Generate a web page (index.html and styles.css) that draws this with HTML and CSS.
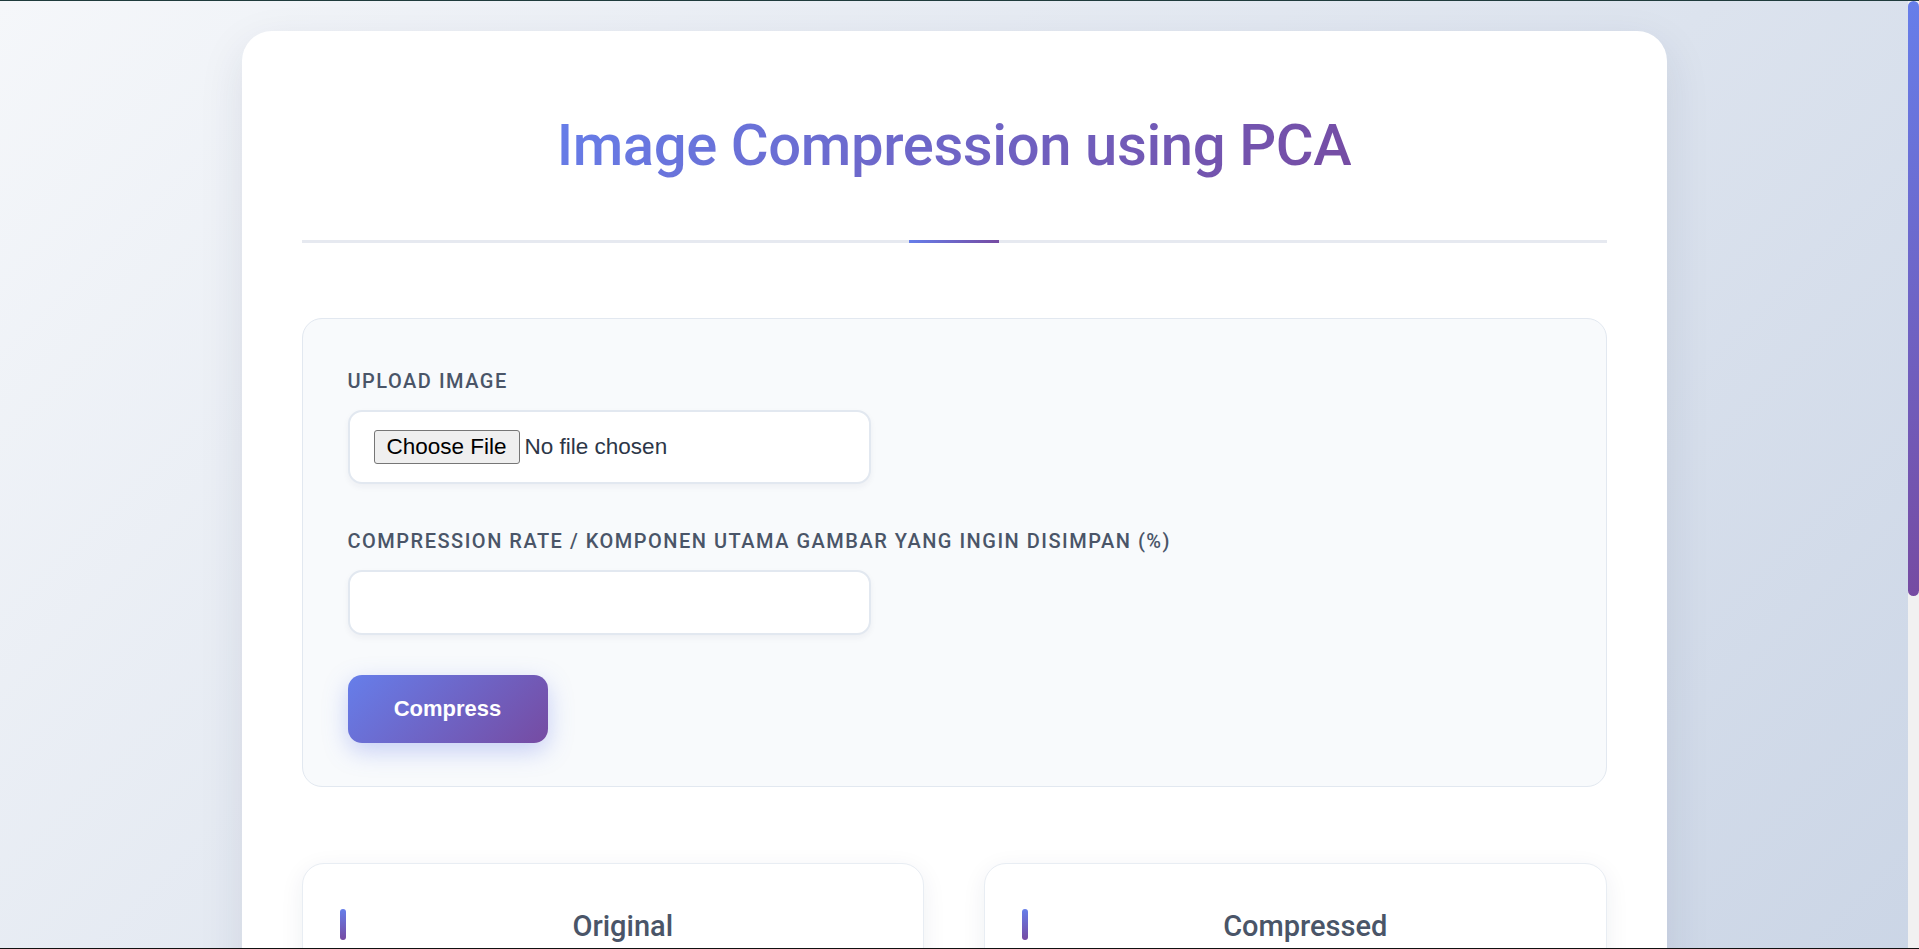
FILE: index.html
```html
<!DOCTYPE html>
<html lang="en">
<head>
<meta charset="UTF-8">
<title>Image Compression using PCA</title>
<link rel="stylesheet" href="styles.css">
</head>
<body>
  <main class="card">
    <header class="header">
      <h1 class="title">Image Compression using PCA</h1>
    </header>

    <form class="panel">
      <div class="group">
        <label class="label" for="image">Upload Image</label>
        <input class="file-input" type="file" id="image" accept="image/*">
      </div>
      <div class="group">
        <label class="label" for="rate">Compression Rate / Komponen Utama Gambar yang ingin disimpan (%)</label>
        <input class="text-input" type="number" id="rate">
      </div>
      <button class="btn" type="button">Compress</button>
    </form>

    <section class="compare">
      <div class="result">
        <h3 class="result-title">Original</h3>
        <div class="preview"></div>
      </div>
      <div class="result">
        <h3 class="result-title">Compressed</h3>
        <div class="preview"></div>
      </div>
    </section>
  </main>

  <div class="scrollbar" aria-hidden="true">
    <div class="scrollbar-thumb"></div>
  </div>
</body>
</html>
```

FILE: styles.css
```css
* { box-sizing: border-box; }

html, body { margin: 0; }

html { scrollbar-width: none; }
::-webkit-scrollbar { width: 0; height: 0; }

body {
  padding: 31px 11px 31px 0;
  min-height: 100vh;
  background: linear-gradient(135deg, #f5f7fa 0%, #c3cfe2 100%);
  font-family: Roboto, "Noto Sans", sans-serif;
  color: #2d3748;
}

body::before,
body::after {
  content: "";
  position: fixed;
  left: 0;
  right: 0;
  height: 1px;
  z-index: 10;
}
body::before { top: 0; background: #1f3b3c; }
body::after { bottom: 0; background: #111; }

/* page scrollbar drawn as an overlay (track + thumb) */
.scrollbar {
  position: fixed;
  top: 0;
  right: 0;
  bottom: 0;
  width: 11px;
  background: #f1f1f1;
  z-index: 5;
}
.scrollbar-thumb {
  margin-top: 1px;
  height: 595px;
  border-radius: 6px;
  background: linear-gradient(180deg, #667eea 0%, #764ba2 100%);
}

.card {
  width: 1425px;
  margin: 0 auto;
  padding: 60px;
  background: #ffffff;
  border-radius: 30px;
  box-shadow: 0 15px 45px rgba(30, 41, 80, 0.10);
}

.header {
  position: relative;
  padding: 19px 0 60px;
  border-bottom: 3px solid #e6e9f0;
  text-align: center;
}
.header::after {
  content: "";
  position: absolute;
  left: 50%;
  bottom: -3px;
  width: 90px;
  height: 3px;
  margin-left: -45px;
  background: linear-gradient(90deg, #667eea, #764ba2);
}

.title {
  display: inline-block;
  margin: 0;
  font-size: 58px;
  line-height: 70px;
  font-weight: 500;
  letter-spacing: -0.4px;
  background: linear-gradient(135deg, #667eea 0%, #764ba2 100%);
  -webkit-background-clip: text;
  background-clip: text;
  color: transparent;
}

.panel {
  margin-top: 75px;
  padding: 50px 45px 43px;
  background: #f8fafc;
  border: 1px solid #e2e8f0;
  border-radius: 20px;
}

.group { margin-bottom: 45px; }
.group + .group { margin-bottom: 40px; }

.label {
  display: block;
  margin-bottom: 16px;
  font-size: 20px;
  line-height: 25px;
  font-weight: 500;
  letter-spacing: 1.5px;
  text-transform: uppercase;
  color: #4a5568;
}

.file-input {
  display: block;
  width: 523px;
  padding: 18px 24px;
  border: 2px solid #e2e8f0;
  border-radius: 14px;
  background: #ffffff;
  font: 22.5px "Liberation Sans", Arial, sans-serif;
  color: #2d3748;
  box-shadow: 0 3px 6px rgba(30, 41, 80, 0.05);
}
.file-input::file-selector-button {
  font: inherit;
  line-height: 24px;
  color: #000;
  padding: 4px 12px;
  margin-right: 5px;
  border: 1px solid #767676;
  border-radius: 3px;
  background: #efefef;
}

.text-input {
  display: block;
  width: 523px;
  height: 65px;
  padding: 0 20px;
  border: 2px solid #e2e8f0;
  border-radius: 14px;
  background: #ffffff;
  font: 22px "Liberation Sans", Arial, sans-serif;
  color: #2d3748;
  box-shadow: 0 3px 6px rgba(30, 41, 80, 0.05);
  outline: none;
}

.btn {
  display: block;
  width: 200px;
  height: 68px;
  border: none;
  border-radius: 14px;
  background: linear-gradient(135deg, #667eea 0%, #764ba2 100%);
  color: #ffffff;
  font: bold 22px "Liberation Sans", Arial, sans-serif;
  box-shadow: 0 8px 25px rgba(102, 126, 234, 0.35);
  cursor: pointer;
}

.compare {
  margin-top: 76px;
  display: grid;
  grid-template-columns: 1fr 1fr;
  gap: 60px;
}

.result {
  padding: 45px 37px;
  background: #ffffff;
  border: 1px solid #e8edf3;
  border-radius: 22px;
  box-shadow: 0 6px 24px rgba(30, 41, 80, 0.07);
}

.result-title {
  position: relative;
  margin: 0;
  padding: 2px 0 0 20px;
  font-size: 29px;
  line-height: 31px;
  font-weight: 500;
  text-align: center;
  color: #4a5568;
}
.result-title::before {
  content: "";
  position: absolute;
  left: 0;
  top: 0;
  bottom: 2px;
  width: 6px;
  border-radius: 3px;
  background: linear-gradient(180deg, #667eea, #764ba2);
}

.preview {
  margin-top: 30px;
  height: 401px;
  border-radius: 14px;
  background: #f8fafc;
}
```
